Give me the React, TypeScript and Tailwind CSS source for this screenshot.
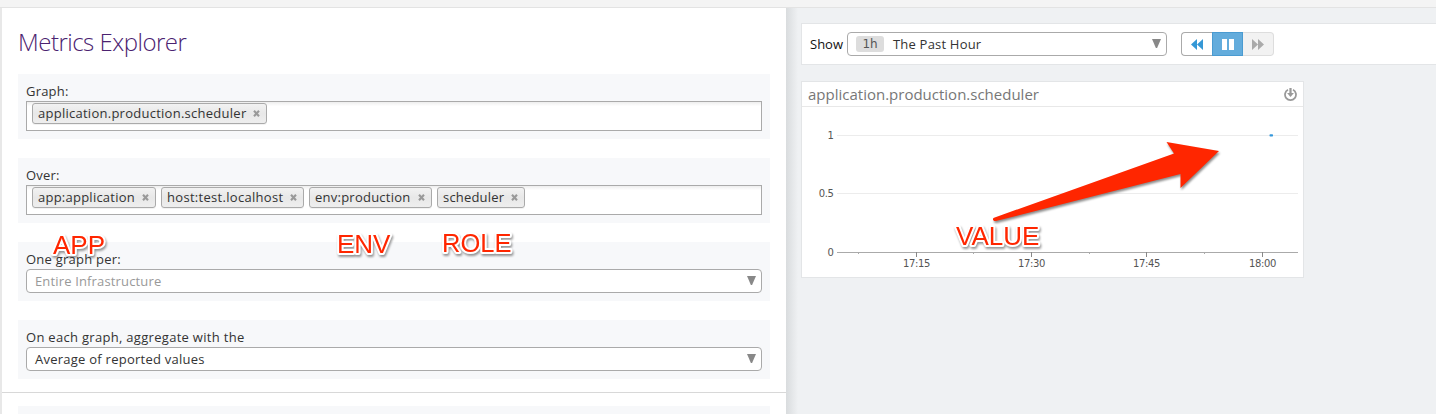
import type { ReactNode } from "react";

const ui = "font-['Open_Sans','Noto_Sans',sans-serif]";

function CloseMark() {
  return (
    <svg className="block size-[7px] shrink-0" viewBox="0 0 7 7">
      <path d="M1 0.8L6 6.2M6 0.8L1 6.2" stroke="#999" strokeWidth="2.1" />
    </svg>
  );
}

function Tag({ label, width, spacing }: { label: string; width: string; spacing: string }) {
  return (
    <span
      className={`flex h-[21px] shrink-0 items-center justify-between rounded-[3px] border border-[#aaa] bg-linear-to-b from-[#f2f2f2] via-[#e8e8e8] to-[#eee] pr-[6px] pl-[5px] shadow-[0_1px_0_rgba(0,0,0,0.05)] ${width}`}
    >
      <span className={`whitespace-nowrap leading-[19px] ${spacing}`}>{label}</span>
      <CloseMark />
    </span>
  );
}

function Field({ label, spacing, height, children }: { label: string; spacing: string; height: string; children: ReactNode }) {
  return (
    <section className={`mb-[19px] bg-[#f7f8fa] px-2 pt-2 ${height}`}>
      <div className={`h-[19px] leading-[19px] whitespace-nowrap ${spacing}`}>{label}</div>
      {children}
    </section>
  );
}

function TagBox({ children }: { children: ReactNode }) {
  return (
    <div className="flex h-[30px] gap-[5px] border border-[#aaa] bg-white bg-linear-to-b from-[#eee] to-white to-15% pt-px pl-[5px]">
      {children}
    </div>
  );
}

function Triangle() {
  return (
    <svg className="mb-[2px] block h-[9px] w-[9px] shrink-0" viewBox="0 0 9 9">
      <path d="M0 0H9L5.1 9H3.9Z" fill="#888" />
    </svg>
  );
}

function SelectBox({ muted, children }: { muted?: boolean; children: ReactNode }) {
  return (
    <div
      className={`flex h-[24px] items-center justify-between rounded-[4px] border border-[#aaa] bg-white pr-[5px] pl-2 ${muted ? "text-[#999]" : "text-[#333]"}`}
    >
      {children}
      <Triangle />
    </div>
  );
}

function Note({ text, place, size }: { text: string; place: string; size: number }) {
  return (
    <svg className={`pointer-events-none absolute h-[34px] w-[100px] overflow-visible ${place}`}>
      <text
        x="0"
        y="26"
        fontSize={size}
        fill="#ff2600"
        stroke="white"
        strokeWidth="4"
        strokeLinejoin="round"
        paintOrder="stroke"
        className="font-['Liberation_Sans',sans-serif] drop-shadow-[1px_2px_1px_rgba(0,0,0,0.4)]"
      >
        {text}
      </text>
    </svg>
  );
}

const hours = [
  { x: 115, label: "17:15" },
  { x: 230, label: "17:30" },
  { x: 345, label: "17:45" },
  { x: 461, label: "18:00" },
];
const minor = [57, 172, 288, 403];
const levels = [
  { y: 28, label: "1" },
  { y: 86, label: "0.5" },
  { y: 145, label: "0" },
];

function Chart() {
  return (
    <svg
      className="block h-[170px] w-[501px] font-['DejaVu_Sans',sans-serif] tracking-[-0.4px]"
      viewBox="0 0 501 170"
      fill="#555"
      fontSize="10"
    >
      {levels.map((l) => (
        <g key={l.label}>
          <path d={`M35 ${l.y + 0.5}H496`} stroke={l.label === "0" ? "#aaa" : "#ececec"} />
          <text x="31.5" y={l.y + 3.8} textAnchor="end">
            {l.label}
          </text>
        </g>
      ))}
      {minor.map((x) => (
        <path key={x} d={`M${x - 0.5} 145V147`} stroke="#aaa" />
      ))}
      {hours.map((h) => (
        <g key={h.label}>
          <path d={`M${h.x - 0.5} 145V150`} stroke="#888" />
          <text x={h.x - 0.5} y="160" textAnchor="middle">
            {h.label}
          </text>
        </g>
      ))}
      <rect x="467.5" y="27.3" width="3.5" height="2.2" rx="0.7" fill="#3598db" />
    </svg>
  );
}

export default function App() {
  return (
    <div className={`relative flex h-[414px] w-[1436px] flex-col overflow-hidden bg-[#eff1f3] text-[13px] text-[#333] ${ui}`}>
      <div className="h-2 shrink-0 border-b border-[#e3e3e3] bg-[#f4f4f4]" />
      <div className="flex min-h-0 flex-1">
        <main className="w-[786px] shrink-0 border-l-2 border-[#e8e8e8] bg-white">
          <div className="px-4 pt-[18px]">
            <h1 className="mb-[16px] h-8 text-[24px] leading-8 font-light tracking-[-0.5px] whitespace-nowrap text-[#4b2270]">
              Metrics Explorer
            </h1>
            <Field label="Graph:" spacing="tracking-[0.2px]" height="h-[65px]">
              <TagBox>
                <Tag label="application.production.scheduler" width="w-[235px]" spacing="tracking-[0.26px]" />
              </TagBox>
            </Field>
            <Field label="Over:" spacing="tracking-[0.2px]" height="h-[65px]">
              <TagBox>
                <Tag label="app:application" width="w-[124px]" spacing="tracking-[0.24px]" />
                <Tag label="host:test.localhost" width="w-[143px]" spacing="tracking-[0.3px]" />
                <Tag label="env:production" width="w-[123px]" spacing="tracking-[0.24px]" />
                <Tag label="scheduler" width="w-[88px]" spacing="tracking-[0.18px]" />
              </TagBox>
            </Field>
            <Field label="One graph per:" spacing="tracking-[0.24px]" height="h-[59px]">
              <SelectBox muted>
                <span className="pt-px tracking-[0.15px]">Entire Infrastructure</span>
              </SelectBox>
            </Field>
            <Field label="On each graph, aggregate with the" spacing="tracking-[0.3px]" height="h-[59px]">
              <SelectBox>
                <span className="pt-px tracking-[0.25px]">Average of reported values</span>
              </SelectBox>
            </Field>
          </div>
          <div className="-mt-[6px] border-t border-[#d8d8d8] px-4 pt-[13px]">
            <div className="h-2 bg-[#f7f8fa]" />
          </div>
        </main>
        <div className="w-[15px] shrink-0 bg-linear-to-r from-[#d9dcde] to-[#eff1f3] to-80%" />
        <aside className="flex-1 pt-[15px]">
          <div className="flex h-[42px] items-center border border-r-0 border-[#e3e5e7] bg-white pl-2">
            <span className="w-[37px] pt-px whitespace-nowrap text-[#111]">Show</span>
            <div className="w-[320px]">
              <SelectBox>
                <span className="flex items-center">
                  <span className="mr-[9px] flex h-[16px] w-[28px] items-center justify-center rounded-[3px] bg-[#ddd] font-['DejaVu_Sans',sans-serif] text-[12px] text-[#555]">
                    1h
                  </span>
                  <span className="pt-px tracking-[0.2px]">The Past Hour</span>
                </span>
              </SelectBox>
            </div>
            <div className="ml-[14px] flex h-[24px] w-[93px]">
              <button className="flex w-[31px] items-center justify-center rounded-l-[4px] border border-r-0 border-[#aaa] bg-white">
                <svg className="h-[11px] w-[12px]" viewBox="0 0 12 11" fill="#3598d6">
                  <path d="M6 0V11L0 5.5ZM12 0V11L6 5.5Z" />
                </svg>
              </button>
              <button className="flex w-[31px] items-center justify-center border border-[#4a9bd1] bg-[#63acdc]">
                <svg className="h-[11px] w-[12px]" viewBox="0 0 12 11" fill="white">
                  <path d="M0 0H5V11H0ZM7 0H12V11H7Z" />
                </svg>
              </button>
              <button className="flex w-[31px] items-center justify-center rounded-r-[4px] border border-l-0 border-[#ddd] bg-[#f2f2f2]">
                <svg className="h-[11px] w-[12px]" viewBox="0 0 12 11" fill="#aaa">
                  <path d="M0 0V11L6 5.5ZM6 0V11L12 5.5Z" />
                </svg>
              </button>
            </div>
          </div>
          <div className="mt-4 h-[197px] w-[503px] border border-[#e3e5e7] bg-white">
            <div className="flex h-[25px] items-center justify-between border-b border-[#e8e8e8] pr-[6px] pl-[6px]">
              <h2 className="text-[15px] whitespace-nowrap text-[#777]">application.production.scheduler</h2>
              <svg className="size-[13px]" viewBox="0 0 14 14" fill="none" stroke="#999" strokeWidth="1.9">
                <path d="M4.3 1.9A5.9 5.9 0 1 0 9.7 1.9" />
                <path d="M7 0V7" strokeWidth="2.4" />
                <path d="M3.3 5.5H10.7L7 9.8Z" fill="#999" stroke="none" />
              </svg>
            </div>
            <Chart />
          </div>
        </aside>
      </div>
      <Note text="APP" size={26} place="top-[228px] left-[53px]" />
      <Note text="ENV" size={26} place="top-[227px] left-[337px]" />
      <Note text="ROLE" size={25.5} place="top-[226px] left-[442px]" />
      <Note text="VALUE" size={26} place="top-[219px] left-[956px]" />
      <svg className="pointer-events-none absolute top-[135px] left-[985px] h-[100px] w-[245px] drop-shadow-[1px_2px_1px_rgba(0,0,0,0.45)]" viewBox="985 135 245 100">
        <path
          d="M994 217.7L1174 153.5L1166.5 142L1219 151L1180.5 188V174L996 221C993 221.5 992 218.5 994 217.7Z"
          fill="#ff2600"
        />
      </svg>
    </div>
  );
}
